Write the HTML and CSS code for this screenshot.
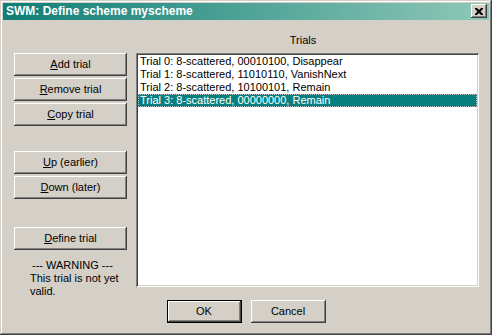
FILE: index.html
```html
<!DOCTYPE html>
<html lang="en">
<head>
  <meta charset="UTF-8">
  <title>SWM: Define scheme myscheme</title>
  <link rel="stylesheet" href="styles.css">
</head>
<body>
  <div class="window">
    <div class="titlebar">
      <span class="title">SWM: Define scheme myscheme</span>
      <button class="close" aria-label="Close">
        <svg width="8" height="7" viewBox="0 0 8 7">
          <path d="M0 0h2l2 2 2-2h2v1l-2.5 2.5L8 6v1H6L4 5 2 7H0V6l2.5-2.5L0 1z" fill="#000"/>
        </svg>
      </button>
    </div>

    <div class="content">
      <div class="left">
        <button class="btn"><u>A</u>dd trial</button>
        <button class="btn"><u>R</u>emove trial</button>
        <button class="btn"><u>C</u>opy trial</button>
        <div class="spacer"></div>
        <button class="btn"><u>U</u>p (earlier)</button>
        <button class="btn"><u>D</u>own (later)</button>
        <div class="spacer wide"></div>
        <button class="btn"><u>D</u>efine trial</button>
        <p class="warning"><span class="head">--- WARNING ---</span><br>This trial is not yet<br>valid.</p>
      </div>

      <div class="right">
        <div class="label">Trials</div>
        <ul class="listbox">
          <li>Trial 0: 8-scattered, 00010100, Disappear</li>
          <li>Trial 1: 8-scattered, 11010110, VanishNext</li>
          <li>Trial 2: 8-scattered, 10100101, Remain</li>
          <li class="selected">Trial 3: 8-scattered, 00000000, Remain</li>
        </ul>
      </div>
    </div>

    <div class="footer">
      <button class="btn default">OK</button>
      <button class="btn">Cancel</button>
    </div>
  </div>
</body>
</html>
```

FILE: styles.css
```css
* {
  box-sizing: border-box;
}
body {
  margin: 0;
  font-family: "Liberation Sans", Arial, sans-serif;
  font-size: 11px;
  color: #000;
  background: #d4d0c8;
}
.window {
  width: 492px;
  height: 335px;
  display: flex;
  flex-direction: column;
  padding: 3px;
  background: #d4d0c8;
  box-shadow: inset -1px -1px #404040, inset 1px 1px #d4d0c8,
              inset -2px -2px #808080, inset 2px 2px #fff;
}
.titlebar {
  height: 18px;
  display: flex;
  align-items: center;
  justify-content: space-between;
  padding: 0 2px 0 3px;
  background: linear-gradient(to right, #0f7e76, #8fc8b8);
}
.title {
  color: #fff;
  font-weight: bold;
  font-size: 12px;
}
.close {
  width: 16px;
  height: 14px;
  padding: 0;
  border: none;
  display: flex;
  align-items: center;
  justify-content: center;
  background: #d4d0c8;
  box-shadow: inset -1px -1px #404040, inset 1px 1px #fff,
              inset -2px -2px #808080, inset 2px 2px #d4d0c8;
}
.content {
  display: flex;
  padding: 0 10px 0 11px;
  flex: 1;
}
.left {
  width: 113px;
  display: flex;
  flex-direction: column;
  padding-top: 33px;
}
.btn {
  height: 23px;
  margin-bottom: 2px;
  padding: 0;
  border: none;
  font-family: inherit;
  font-size: 11px;
  color: #000;
  background: #d4d0c8;
  box-shadow: inset -1px -1px #404040, inset 1px 1px #fff,
              inset -2px -2px #808080, inset 2px 2px #d4d0c8;
}
.spacer {
  height: 23px;
}
.spacer.wide {
  height: 26px;
}
.warning {
  margin: 7px 0 0 16px;
  line-height: 13px;
}
.warning .head {
  padding-left: 2px;
}
.right {
  margin-left: 9px;
  flex: 1;
  display: flex;
  flex-direction: column;
}
.label {
  text-align: center;
  padding: 14px 9px 0 0;
  height: 33px;
}
.listbox {
  list-style: none;
  margin: 0;
  padding: 2px;
  height: 234px;
  background: #fff;
  box-shadow: inset 1px 1px #808080, inset -1px -1px #fff,
              inset 2px 2px #404040, inset -2px -2px #d4d0c8;
}
.listbox li {
  height: 13px;
  line-height: 13px;
  padding-left: 2px;
  white-space: nowrap;
}
.listbox .selected {
  background: #087f7f;
  color: #fff;
  outline: 1px dotted #c0c0c0;
  outline-offset: -1px;
}
.footer {
  display: flex;
  justify-content: center;
  gap: 9px;
  height: 37px;
  padding-top: 2px;
}
.footer .btn {
  width: 75px;
}
.btn.default {
  box-shadow: inset 0 0 0 1px #000, inset -2px -2px #404040, inset 2px 2px #fff,
              inset -3px -3px #808080, inset 3px 3px #d4d0c8;
}
```
